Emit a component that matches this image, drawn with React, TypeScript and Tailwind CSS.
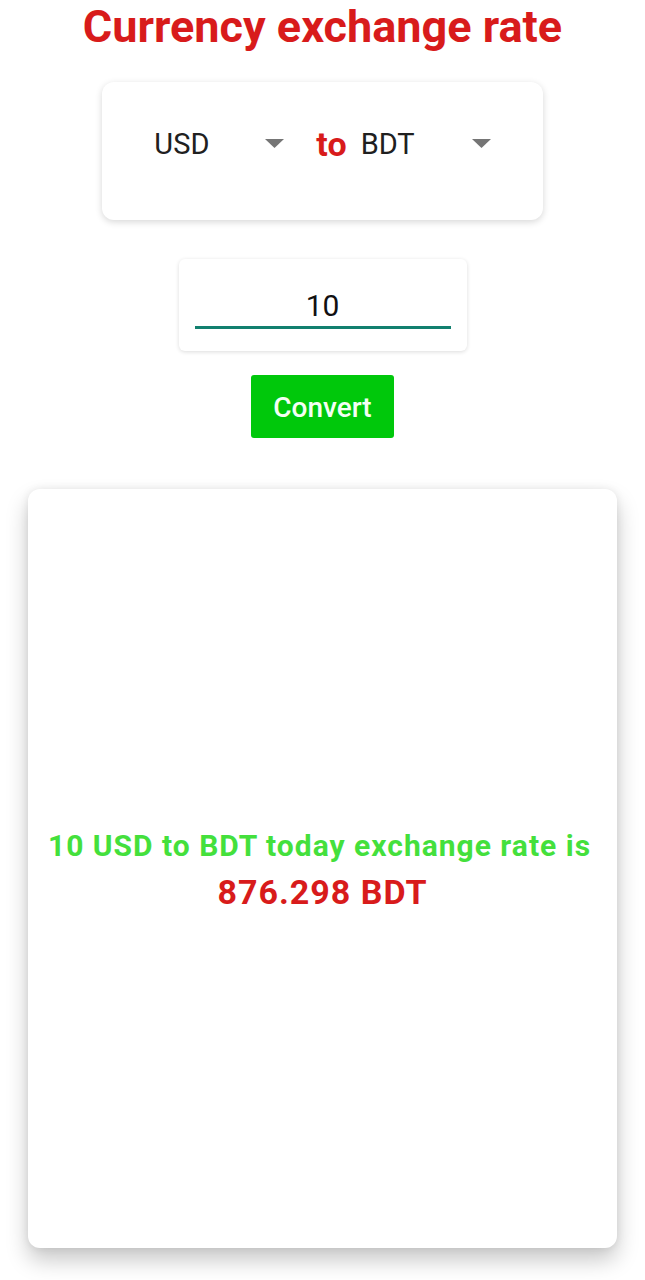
import React, { useState } from 'react';

function Caret() {
  return (
    <svg width="19" height="9" viewBox="0 0 19 9" className="mb-[3px]">
      <path d="M0 0 L19 0 L9.5 9 Z" fill="#757575" />
    </svg>
  );
}

function Spinner({ value }: { value: string }) {
  return (
    <div className="flex w-[130px] items-center justify-between">
      <span className="text-[29px] leading-[35px] text-[#202020]">{value}</span>
      <Caret />
    </div>
  );
}

export default function App() {
  const [amount] = useState('10');

  return (
    <div className="min-h-[1280px] bg-white flex flex-col items-center font-['Roboto',_'Liberation_Sans',_sans-serif]">
      <h1 className="text-[45px] leading-[53px] font-bold text-[#d81b1b]">Currency exchange rate</h1>

      {/* currency pickers */}
      <div className="mt-[29px] w-[441px] h-[138px] bg-white rounded-xl shadow-[0_2px_7px_rgba(0,0,0,0.16)] flex justify-center items-start pt-[45px]">
        <div className="flex items-center">
          <Spinner value="USD" />
          <span className="ml-[32px] mr-[14px] text-[34px] leading-[35px] font-bold text-[#d81b1b]">to</span>
          <Spinner value="BDT" />
        </div>
      </div>

      {/* amount input */}
      <div className="mt-[39px] w-[288px] h-[92px] bg-white rounded-md shadow-[0_1px_4px_rgba(0,0,0,0.14)] px-4 pt-[29px]">
        <div className="border-b-[3px] border-[#12806f] pb-[3px] text-center text-[30px] leading-[35px] text-[#111]">
          {amount}
        </div>
      </div>

      <button className="mt-[24px] w-[143px] h-[63px] bg-[#00c80b] rounded-[3px] pt-[3px] text-[28px] font-medium text-[#f4fff4]">
        Convert
      </button>

      {/* result */}
      <div className="mt-[51px] self-stretch mx-[28px] h-[759px] bg-white rounded-xl shadow-[0_12px_22px_rgba(0,0,0,0.22),0_0_8px_rgba(0,0,0,0.08)] flex flex-col items-center justify-center">
        <p className="-ml-[6px] text-[30px] leading-[46px] tracking-[1px] font-bold text-[#44e03c]">10 USD to BDT today exchange rate is</p>
        <p className="text-[34px] leading-[46px] tracking-[1px] font-bold text-[#d81b1b]">876.298 BDT</p>
      </div>
    </div>
  );
}
